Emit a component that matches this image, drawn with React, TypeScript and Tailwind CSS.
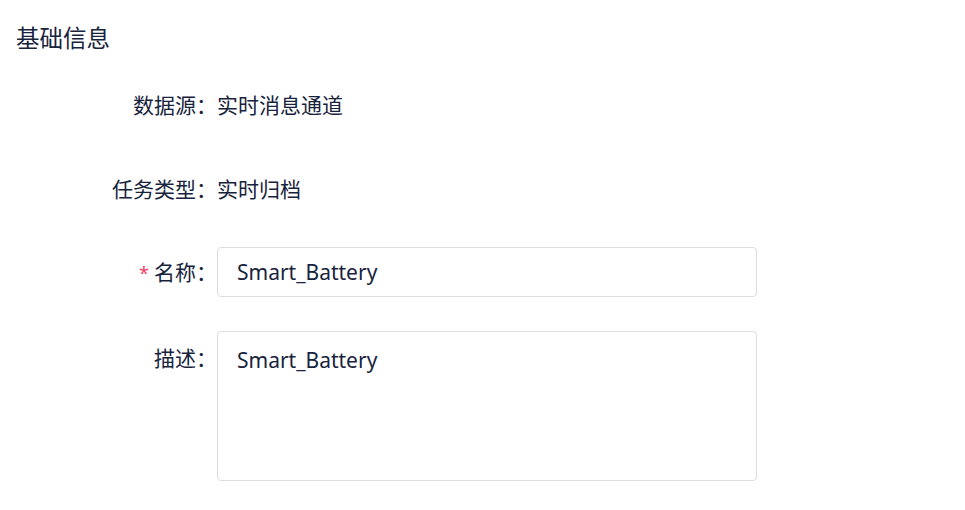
const font = "font-['Noto_Sans','Noto_Sans_CJK_SC',sans-serif]";

function Label({ children, required }: { children: React.ReactNode; required?: boolean }) {
  return (
    <div className="w-[217px] shrink-0 whitespace-nowrap text-right text-[21px] leading-[28px] text-[#17233d]">
      {required && <span className="mr-[5px] text-[18px] text-[#ee4266]">*</span>}
      {children}
    </div>
  );
}

export default function App() {
  return (
    <div className={`${font} min-h-[510px] bg-white text-[#17233d]`}>
      <h2 className="pl-[16px] pt-[24px] text-[23.5px] font-normal leading-[28px] text-[#17233d]">基础信息</h2>

      <div className="mt-[39px] flex">
        <Label>数据源：</Label>
        <div className="text-[21px] leading-[28px]">实时消息通道</div>
      </div>

      <div className="mt-[56px] flex">
        <Label>任务类型：</Label>
        <div className="text-[21px] leading-[28px]">实时归档</div>
      </div>

      <div className="mt-[44px] flex items-center">
        <Label required>名称：</Label>
        <input
          readOnly
          value="Smart_Battery"
          className="h-[50px] w-[540px] rounded-[4px] border border-[#dcdee2] px-[19px] text-[21px] text-[#17233d] outline-none"
        />
      </div>

      <div className="mt-[34px] flex">
        <div className="pt-[13px]">
          <Label>描述：</Label>
        </div>
        <textarea
          readOnly
          value="Smart_Battery"
          className="h-[150px] w-[540px] resize-none rounded-[4px] border border-[#dcdee2] px-[19px] pt-[14px] text-[21px] leading-[28px] text-[#17233d] outline-none"
        />
      </div>
    </div>
  );
}
